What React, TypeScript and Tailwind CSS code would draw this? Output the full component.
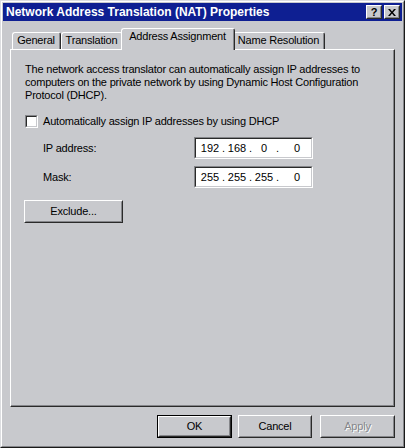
import React from "react";

const font = { fontFamily: '"Liberation Sans", Arial, sans-serif' };

function Raised({ className = "", children }: { className?: string; children?: React.ReactNode }) {
  return (
    <div className={`border border-t-white border-l-white border-r-[#2a2a2a] border-b-[#2a2a2a] ${className}`}>
      <div className="w-full h-full border border-t-[#c8c9cd] border-l-[#c8c9cd] border-r-[#85868a] border-b-[#85868a] flex items-center justify-center">
        {children}
      </div>
    </div>
  );
}

function Sunken({ className = "", children }: { className?: string; children?: React.ReactNode }) {
  return (
    <div className={`border border-t-[#85868a] border-l-[#85868a] border-r-white border-b-white ${className}`}>
      <div className="w-full h-full border border-t-[#2a2a2a] border-l-[#2a2a2a] border-r-[#c8c9cd] border-b-[#c8c9cd] bg-white flex items-center">
        {children}
      </div>
    </div>
  );
}

function IpField({ octets }: { octets: string[] }) {
  return (
    <Sunken className="w-[119px] h-[22px]">
      <div className="flex items-center text-[11px] text-black pl-[3px] leading-none tracking-normal">
        <span className="w-[22px] text-center">{octets[0]}</span>
        <span className="w-[5px] text-center">.</span>
        <span className="w-[22px] text-center">{octets[1]}</span>
        <span className="w-[5px] text-center">.</span>
        <span className="w-[22px] text-center">{octets[2]}</span>
        <span className="w-[5px] text-center">.</span>
        <span className="w-[34px] text-center">{octets[3]}</span>
      </div>
    </Sunken>
  );
}

function Tab({ label, width, selected = false }: { label: string; width: number; selected?: boolean }) {
  if (selected) {
    return (
      <div
        className="relative z-10 -mb-px -mx-[2px] h-[22px] bg-[#c8c9cd] border-l border-t border-t-white border-l-white border-r border-r-[#2a2a2a] rounded-t-[3px]"
        style={{ width: width + 4 }}
      >
        <div className="w-full h-full border-r border-r-[#85868a] flex justify-center pt-[2px] text-[11px] leading-[11px] text-black">
          {label}
        </div>
      </div>
    );
  }
  return (
    <div
      className="h-[17px] bg-[#c8c9cd] border-l border-t border-t-white border-l-white border-r border-r-[#2a2a2a] rounded-t-[3px]"
      style={{ width }}
    >
      <div className="w-full h-full border-r border-r-[#85868a] flex justify-center pt-[2px] text-[11px] leading-[11px] text-black">
        {label}
      </div>
    </div>
  );
}

export default function App() {
  return (
    <div style={font} className="w-[405px] h-[448px] bg-[#c8c9cd] select-none tracking-[-0.2px]">
      <div className="w-full h-full border border-t-[#dcdde0] border-l-[#dcdde0] border-r-[#1a1a1a] border-b-[#1a1a1a]">
        <div className="w-full h-full border border-t-white border-l-white border-r-[#85868a] border-b-[#85868a] p-px flex flex-col">
          {/* Title bar */}
          <div className="h-[18px] bg-[#0e1f92] flex items-center justify-between pl-[3px] pr-[2px]">
            <span className="text-white font-bold text-[12px] leading-none tracking-normal">
              Network Address Translation (NAT) Properties
            </span>
            <div className="flex gap-[2px]">
              <Raised className="w-[16px] h-[14px] bg-[#c8c9cd]">
                <span className="text-black font-bold text-[11px] leading-none">?</span>
              </Raised>
              <Raised className="w-[16px] h-[14px] bg-[#c8c9cd]">
                <svg width="8" height="7" viewBox="0 0 8 7">
                  <path d="M0 0h2l2 2.5L6 0h2L5 3.5 8 7H6L4 4.5 2 7H0l3-3.5z" fill="#000" />
                </svg>
              </Raised>
            </div>
          </div>

          <div className="px-[7px] pt-[7px] flex flex-col">
            {/* Tabs */}
            <div className="flex items-end pl-[2px] h-[21px]">
              <Tab label="General" width={49} />
              <Tab label="Translation" width={62} />
              <Tab label="Address Assignment" width={110} selected />
              <Tab label="Name Resolution" width={92} />
            </div>

            {/* Panel */}
            <div className="h-[358px] border border-t-white border-l-white border-r-[#2a2a2a] border-b-[#2a2a2a]">
              <div className="w-full h-full border-r border-b border-r-[#85868a] border-b-[#85868a] pl-[14px] pt-[13px] text-[11px] text-black">
                <p className="leading-[13px] w-[350px]">
                  The network access translator can automatically assign IP addresses to computers on the private network by using Dynamic Host Configuration Protocol (DHCP).
                </p>

                <div className="flex items-center mt-[13px] h-[13px]">
                  <Sunken className="w-[13px] h-[13px]" />
                  <span className="ml-[5px] leading-none">Automatically assign IP addresses by using DHCP</span>
                </div>

                <div className="flex items-center mt-[9px] h-[22px]">
                  <span className="ml-[18px] w-[151px] leading-none">IP address:</span>
                  <IpField octets={["192", "168", "0", "0"]} />
                </div>
                <div className="flex items-center mt-[7px] h-[22px]">
                  <span className="ml-[18px] w-[151px] leading-none">Mask:</span>
                  <IpField octets={["255", "255", "255", "0"]} />
                </div>

                <Raised className="mt-[12px] -ml-px w-[99px] h-[23px]">
                  <span className="text-[11px] leading-none">Exclude...</span>
                </Raised>
              </div>
            </div>

            {/* Bottom buttons */}
            <div className="flex justify-end gap-[6px] mt-[8px]">
              <div className="w-[75px] h-[23px] border border-black">
                <Raised className="w-full h-full">
                  <span className="text-[11px] leading-none">OK</span>
                </Raised>
              </div>
              <Raised className="w-[74px] h-[23px]">
                <span className="text-[11px] leading-none">Cancel</span>
              </Raised>
              <Raised className="w-[75px] h-[23px] ml-[2px]">
                <span className="text-[11px] leading-none text-[#85868a] [text-shadow:1px_1px_0_#fff]">Apply</span>
              </Raised>
            </div>
          </div>
        </div>
      </div>
    </div>
  );
}
